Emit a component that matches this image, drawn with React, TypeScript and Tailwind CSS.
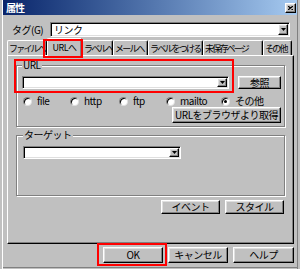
const raised =
  "border border-t-white border-l-white border-r-black border-b-black shadow-[inset_-1px_-1px_0_#808080,inset_1px_1px_0_#dfdfdf] bg-[#c0c0c0]";
const sunken =
  "border border-t-[#808080] border-l-[#808080] border-r-white border-b-white shadow-[inset_1px_1px_0_#000,inset_-1px_-1px_0_#dfdfdf]";

const tabs = [
  { label: "ファイルへ", w: "w-[40px]" },
  { label: "URLへ", w: "w-[35px]", active: true },
  { label: "ラベルへ", w: "w-[31px]" },
  { label: "メールへ", w: "w-[35px]" },
  { label: "ラベルをつける", w: "w-[55px]" },
  { label: "未保存ページ", w: "w-[60px]" },
  { label: "その他", w: "w-[29px]" },
];

const radios = [
  { label: "file", w: "w-[47px]" },
  { label: "http", w: "w-[49px]" },
  { label: "ftp", w: "w-[47px]" },
  { label: "mailto", w: "w-[55px]" },
  { label: "その他", w: "", checked: true },
];

function Arrow() {
  return (
    <svg width="5" height="3" viewBox="0 0 5 3">
      <path d="M0 0h5L2.5 3z" fill="#000" />
    </svg>
  );
}

function Combo({ className, text }: { className: string; text?: string }) {
  return (
    <div className={`${sunken} bg-white flex items-stretch p-px ${className}`}>
      <span className="flex-1 pl-[2px] flex items-center whitespace-nowrap leading-none">
        {text}
      </span>
      <div className={`${raised} w-[10px] flex items-center justify-center`}>
        <Arrow />
      </div>
    </div>
  );
}

function Btn({ className, children }: { className: string; children: React.ReactNode }) {
  return (
    <div className={`${raised} flex items-center justify-center whitespace-nowrap leading-none ${className}`}>
      {children}
    </div>
  );
}

function Radio({ checked }: { checked?: boolean }) {
  return (
    <div className="w-[9px] h-[9px] rounded-full bg-white border border-t-[#808080] border-l-[#808080] border-r-[#dfdfdf] border-b-[#dfdfdf] shadow-[inset_1px_1px_0_#000] flex items-center justify-center shrink-0">
      {checked && <div className="w-[3px] h-[3px] rounded-full bg-black" />}
    </div>
  );
}

export default function App() {
  return (
    <div className="w-[300px] h-[269px] bg-[#c0c0c0] pl-[3px] pr-[3px] flex flex-col overflow-hidden text-black text-[10px] leading-[12px] tracking-[-0.5px] font-['Noto_Sans_CJK_JP',sans-serif] shadow-[inset_2px_0_0_#c0c0c0,inset_3px_0_0_#fff,inset_-2px_0_0_#c0c0c0,inset_-3px_0_0_#808080,inset_0_-1px_0_#c0c0c0,inset_0_-2px_0_#808080]">
      {/* title bar */}
      <div className="h-[15px] shrink-0 flex items-center bg-linear-to-r from-[#0a246a] to-[#a6caf0]">
        <span className="ml-[3px] text-white font-bold text-[10px] tracking-[-1px]">属性</span>
        <div className={`${raised} ml-auto mr-px w-[11px] h-[10px] flex items-center justify-center`}>
          <svg width="5" height="4" viewBox="0 0 5 4">
            <path d="M0 0L5 4M5 0L0 4" stroke="#000" strokeWidth="1.2" />
          </svg>
        </div>
      </div>

      {/* tag row */}
      <div className="flex items-center mt-[7px] h-[15px] shrink-0">
        <span className="ml-[9px] w-[38px]">タグ(G)</span>
        <Combo className="w-[240px] h-[15px]" text="リンク" />
      </div>

      {/* tabs */}
      <div className="flex items-end ml-[4px] mt-px h-[17px] shrink-0 text-[9px] tracking-[-1.8px] leading-none">
        {tabs.map((t) =>
          t.active ? (
            <div
              key={t.label}
              className={`${t.w} relative z-10 -mb-px h-[18px] bg-[#c0c0c0] border-t border-l border-white border-r border-r-black shadow-[inset_-1px_0_0_#808080] rounded-t-[2px] flex items-start pt-[4px] justify-center whitespace-nowrap tracking-[-0.5px]`}
            >
              {t.label}
              <div className="absolute left-[-5px] top-0 w-[40px] h-[19px] border-2 border-[#f00] pointer-events-none" />
            </div>
          ) : (
            <div
              key={t.label}
              className={`${t.w} h-[15px] border-t border-l border-white border-r border-r-black shadow-[inset_-1px_0_0_#808080] rounded-t-[2px] flex items-center pl-px whitespace-nowrap overflow-hidden`}
            >
              {t.label}
            </div>
          )
        )}
      </div>

      {/* panel */}
      <div className="ml-[4px] w-[287px] h-[189px] shrink-0 flex flex-col border border-t-white border-l-white border-r-black border-b-black shadow-[inset_-1px_-1px_0_#808080]">
        <div className="relative mx-[8px] mt-[3px]">
          <fieldset className="border border-[#808080] shadow-[1px_1px_0_#fff,inset_1px_1px_0_#fff] pl-[5px] pr-[3px] pt-[5px] pb-[3px] min-w-0">
            <legend className="px-px bg-[#c0c0c0] leading-[12px]">URL</legend>
            <div className="flex items-center gap-[9px]">
              <Combo className="w-[207px] h-[13px]" />
              <Btn className="w-[43px] h-[13px]">参照</Btn>
            </div>
            <div className="flex items-center mt-[7px] h-[10px] pl-px">
              {radios.map((r) => (
                <div key={r.label} className={`${r.w} flex items-center gap-[5px]`}>
                  <Radio checked={r.checked} />
                  <span className="whitespace-nowrap">{r.label}</span>
                </div>
              ))}
            </div>
            <div className="flex justify-end mt-px">
              <Btn className="w-[109px] h-[16px]">URLをブラウザより取得</Btn>
            </div>
          </fieldset>
          <div className="absolute left-[-2px] top-0 w-[220px] h-[34px] border-2 border-[#f00] pointer-events-none" />
        </div>

        <fieldset className="mx-[8px] mt-[2px] border border-[#808080] shadow-[1px_1px_0_#fff,inset_1px_1px_0_#fff] pl-[6px] pt-[5px] pb-[36px] min-w-0">
          <legend className="px-px bg-[#c0c0c0] leading-[12px]">ターゲット</legend>
          <Combo className="w-[158px] h-[13px]" />
        </fieldset>

        <div className="flex justify-end gap-[5px] mt-[4px] pr-[9px]">
          <Btn className="w-[59px] h-[14px]">イベント</Btn>
          <Btn className="w-[59px] h-[14px]">スタイル</Btn>
        </div>
      </div>

      {/* bottom buttons */}
      <div className="flex justify-end gap-[5px] mt-[3px] mr-[3px] shrink-0">
        <div className="relative">
          <Btn className="w-[60px] h-[16px]">OK</Btn>
          <div className="absolute left-[-6px] top-[-4px] w-[70px] h-[23px] border-2 border-[#f00] pointer-events-none" />
        </div>
        <Btn className="w-[60px] h-[16px]">キャンセル</Btn>
        <Btn className="w-[61px] h-[16px]">ヘルプ</Btn>
      </div>
    </div>
  );
}
